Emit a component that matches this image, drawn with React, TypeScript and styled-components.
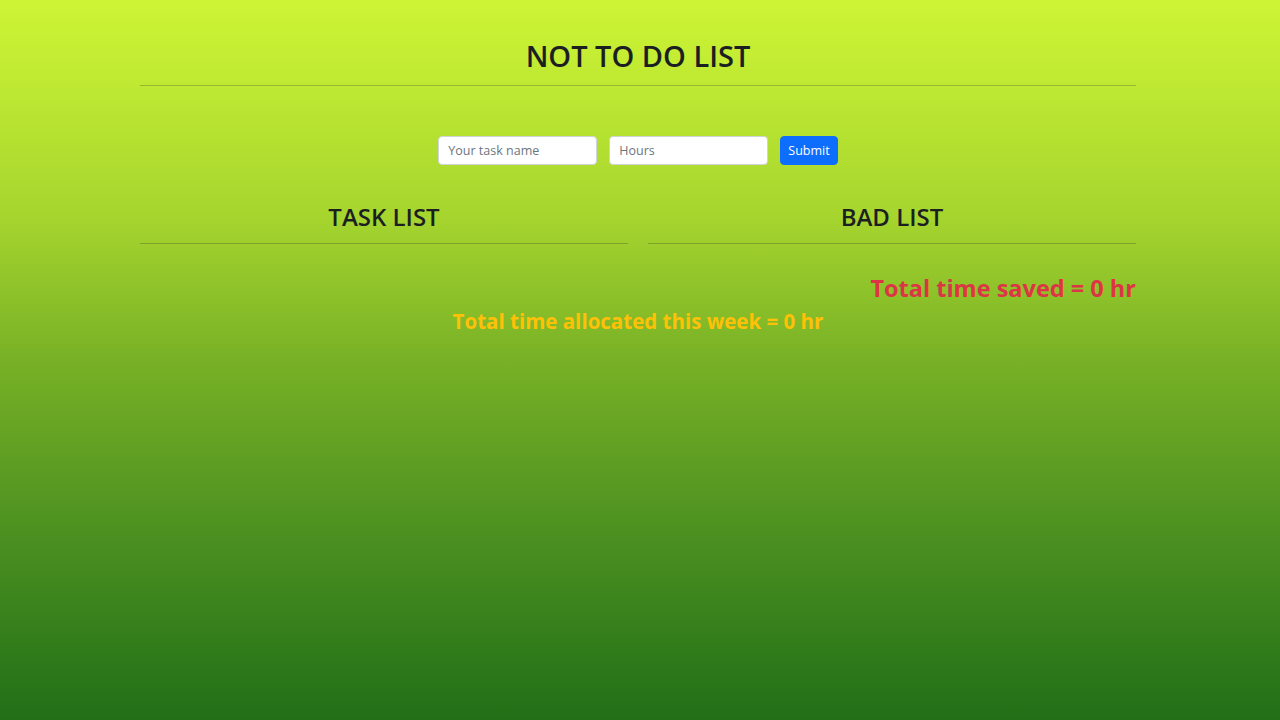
import React from "react";
import styled, { createGlobalStyle } from "styled-components";

const GlobalStyle = createGlobalStyle`
  html, body { margin: 0; padding: 0; }
  body {
    font-family: "Open Sans", "Noto Sans", "Liberation Sans", sans-serif;
    color: #212529;
  }
  * { box-sizing: border-box; }
`;

const Page = styled.div`
  min-height: 100vh;
  background: linear-gradient(to bottom, #cef535 0%, #a6d52e 30%, #78b126 50%, #4a8f20 75%, #216f17 100%);
  padding-top: 37px;
`;

const Container = styled.div`
  width: 996px;
  margin: 0 0 0 140px;
`;

const Title = styled.h1`
  margin: 0;
  text-align: center;
  font-size: 29px;
  line-height: 38px;
  font-weight: 600;
  color: #1c1f22;
`;

const Rule = styled.hr<{ $mt: number }>`
  margin: ${(p) => p.$mt}px 0 0;
  border: 0;
  border-top: 1px solid rgba(33, 37, 41, 0.25);
  height: 0;
`;

const Form = styled.form`
  display: flex;
  justify-content: center;
  gap: 12px;
  margin-top: 50px;
`;

const Input = styled.input`
  width: 159px;
  height: 29px;
  padding: 0 9px;
  font-family: inherit;
  font-size: 12.5px;
  color: #212529;
  background: #fff;
  border: 1px solid #ced4da;
  border-radius: 4px;
  outline: none;
  &::placeholder { color: #6c757d; }
`;

const Button = styled.button`
  height: 29px;
  padding: 0 7px;
  font-family: inherit;
  font-size: 12.5px;
  color: #fff;
  background: #0d6efd;
  border: 1px solid #0d6efd;
  border-radius: 4px;
  cursor: pointer;
`;

const Columns = styled.div`
  display: grid;
  grid-template-columns: 1fr 1fr;
  column-gap: 20px;
  margin-top: 35px;
`;

const ListHeading = styled.h2`
  margin: 0;
  text-align: center;
  font-size: 24px;
  line-height: 34px;
  font-weight: 600;
  color: #1c1f22;
`;

const Saved = styled.h3`
  margin: 30px 0 0;
  text-align: right;
  font-size: 23.5px;
  line-height: 29px;
  font-weight: 700;
  color: #dc3545;
`;

const Allocated = styled.h4`
  margin: 6px 0 0;
  text-align: center;
  font-size: 20.5px;
  line-height: 25px;
  font-weight: 700;
  color: #ffc107;
`;

export default function App() {
  return (
    <>
      <GlobalStyle />
      <Page>
        <Container>
          <Title>NOT TO DO LIST</Title>
          <Rule $mt={10} />
          <Form onSubmit={(e) => e.preventDefault()}>
            <Input type="text" placeholder="Your task name" />
            <Input type="number" placeholder="Hours" />
            <Button type="submit">Submit</Button>
          </Form>
          <Columns>
            <div>
              <ListHeading>TASK LIST</ListHeading>
              <Rule $mt={9} />
            </div>
            <div>
              <ListHeading>BAD LIST</ListHeading>
              <Rule $mt={9} />
            </div>
          </Columns>
          <Saved>Total time saved = 0 hr</Saved>
          <Allocated>Total time allocated this week = 0 hr</Allocated>
        </Container>
      </Page>
    </>
  );
}
